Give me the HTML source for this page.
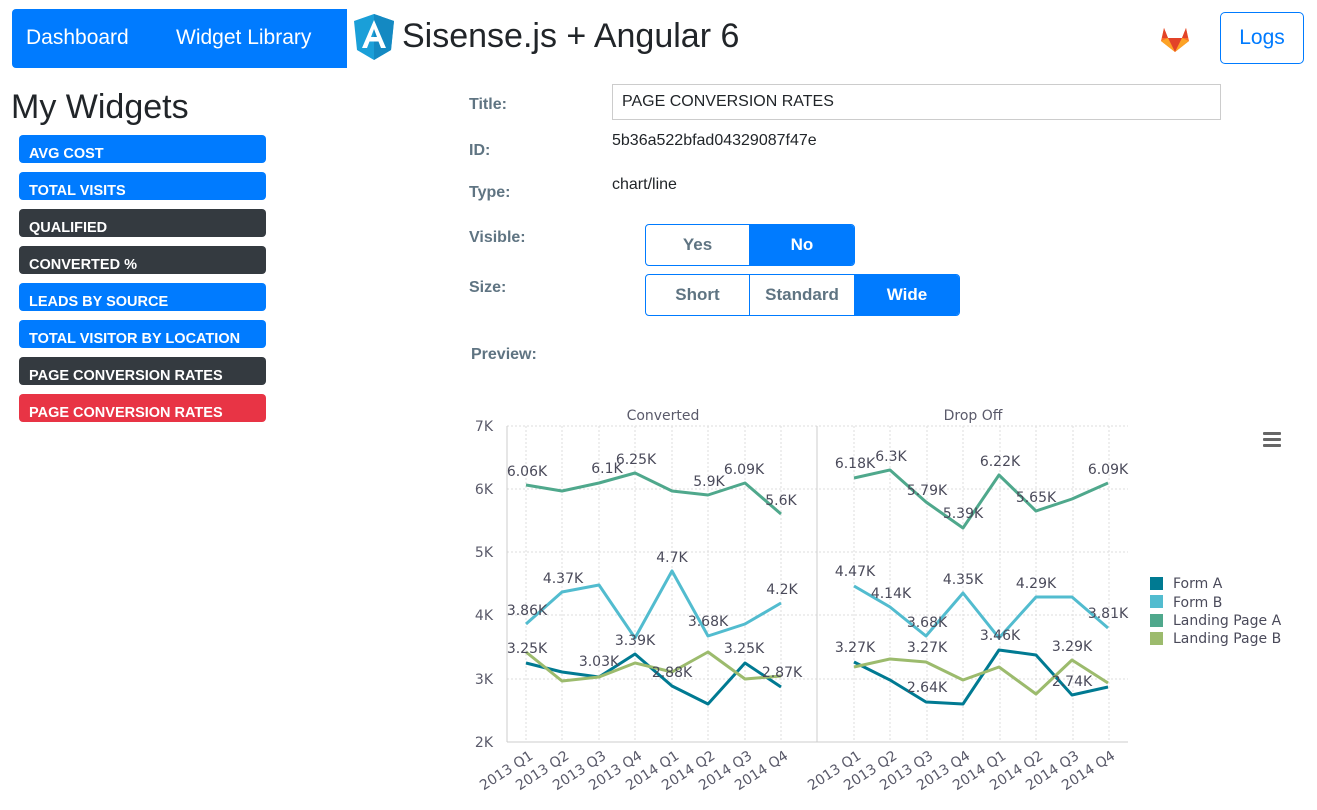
<!DOCTYPE html>
<html><head><meta charset="utf-8"><style>
*{box-sizing:border-box}
body{margin:0;width:1317px;height:810px;overflow:hidden;background:#fff;font-family:"Liberation Sans",sans-serif;color:#212529;position:relative}
.abs{position:absolute}
.nav{left:12px;top:9px;width:335px;height:59px;background:#007bff;border-radius:4px 0 0 4px;color:#fff;font-size:21px}
.badge{position:absolute;left:19px;width:247px;height:28px;border-radius:4px;color:#fff;font-weight:bold;font-size:14.5px;padding:11px 0 0 10px;line-height:17px}
.b{background:#007bff}.d{background:#343a40}.r{background:#e83445}
.lbl{position:absolute;left:469px;font-weight:bold;color:#5f7482;font-size:16px}
.grp{position:absolute;display:flex;border:1px solid #007bff;border-radius:4px;overflow:hidden}
.grp div{height:40px;line-height:40px;text-align:center;font-weight:bold;font-size:17px;color:#5f7482;border-right:1px solid #007bff}
.grp div:last-child{border-right:none}
.grp .on{background:#007bff;color:#fff}
</style></head><body>
<div class="abs nav"><span class="abs" style="left:14px;top:17px">Dashboard</span><span class="abs" style="left:164px;top:17px">Widget Library</span></div>
<svg class="abs" style="left:354px;top:14px" width="40" height="46" viewBox="0 0 40 46">
<path d="M20 0L0 7l3 29 17 10 17-10 3-29z" fill="#1a9fd8"/><path d="M20 0v46l17-10 3-29z" fill="#1489c2"/>
<path d="M20 6L8 34h5l2.5-6.5h9L27 34h5zM17 23l3-8 3 8z" fill="#fff"/></svg>
<div class="abs" style="left:402px;top:17px;font-size:34px">Sisense.js + Angular 6</div>
<svg class="abs" style="left:1161px;top:27px" width="28" height="25" viewBox="0 0 28 25">
<path d="M14 25L0 14 3 1l4 10h14l4-10 3 13z" fill="#fc6d26"/><path d="M14 25L7 11h14z" fill="#e24329"/><path d="M14 25L0 14l7-3z M14 25l14-11-7-3z" fill="#fca326"/><path d="M3 1l4 10H1z M25 1l-4 10h6z" fill="#e24329"/></svg>
<div class="abs" style="left:1220px;top:12px;width:84px;height:52px;border:1px solid #007bff;border-radius:5px;color:#007bff;font-size:21px;text-align:center;line-height:50px">Logs</div>
<div class="abs" style="left:11px;top:88px;font-size:34px">My Widgets</div>
<div class="badge b" style="top:135px">AVG COST</div>
<div class="badge b" style="top:172px">TOTAL VISITS</div>
<div class="badge d" style="top:209px">QUALIFIED</div>
<div class="badge d" style="top:246px">CONVERTED %</div>
<div class="badge b" style="top:283px">LEADS BY SOURCE</div>
<div class="badge b" style="top:320px">TOTAL VISITOR BY LOCATION</div>
<div class="badge d" style="top:357px">PAGE CONVERSION RATES</div>
<div class="badge r" style="top:394px">PAGE CONVERSION RATES</div>
<div class="lbl" style="top:96px">Title:</div>
<div class="lbl" style="top:142px">ID:</div>
<div class="lbl" style="top:184px">Type:</div>
<div class="lbl" style="top:229px">Visible:</div>
<div class="lbl" style="top:279px">Size:</div>
<div class="lbl" style="top:346px;left:471px">Preview:</div>
<div class="abs" style="left:612px;top:84px;width:609px;height:36px;border:1px solid #ccc;padding:8px 9px;font-size:16px">PAGE CONVERSION RATES</div>
<div class="abs" style="left:612px;top:132px;font-size:16px">5b36a522bfad04329087f47e</div>
<div class="abs" style="left:612px;top:176px;font-size:16px">chart/line</div>
<div class="grp" style="left:645px;top:224px"><div style="width:104px">Yes</div><div class="on" style="width:104px">No</div></div>
<div class="grp" style="left:645px;top:274px"><div style="width:104px">Short</div><div style="width:105px">Standard</div><div class="on" style="width:104px">Wide</div></div>
<svg class="abs" style="left:0;top:0" width="1317" height="810" font-family="'DejaVu Sans',sans-serif" font-size="13">
<g stroke="#ddd" stroke-dasharray="2,2" stroke-width="1">
<line x1="507" y1="426" x2="1128" y2="426"/><line x1="507" y1="489" x2="1128" y2="489"/><line x1="507" y1="552" x2="1128" y2="552"/><line x1="507" y1="615" x2="1128" y2="615"/><line x1="507" y1="679" x2="1128" y2="679"/>
<g id="v"><line x1="526" y1="426" x2="526" y2="742"/><line x1="562" y1="426" x2="562" y2="742"/><line x1="599" y1="426" x2="599" y2="742"/><line x1="635" y1="426" x2="635" y2="742"/><line x1="672" y1="426" x2="672" y2="742"/><line x1="708" y1="426" x2="708" y2="742"/><line x1="745" y1="426" x2="745" y2="742"/><line x1="781" y1="426" x2="781" y2="742"/></g>
<use href="#v" x="328"/>
</g>
<line x1="507" y1="426" x2="507" y2="742" stroke="#ccc"/><line x1="817" y1="426" x2="817" y2="742" stroke="#ccc"/>
<line x1="507" y1="742" x2="1128" y2="742" stroke="#ccc"/>
<g fill="#5a5a6a" text-anchor="end" font-size="14"><text x="493" y="431">7K</text><text x="493" y="494">6K</text><text x="493" y="557">5K</text><text x="493" y="620">4K</text><text x="493" y="684">3K</text><text x="493" y="747">2K</text></g>
<g fill="#5a5a6a" text-anchor="middle" font-size="14"><text x="663" y="420">Converted</text><text x="973" y="420">Drop Off</text></g>
<g fill="none" stroke-width="3" stroke-linejoin="round">
<polyline stroke="#4fa88c" points="526,485 562,491 599,483 635,473 672,491 708,495 745,483 781,514"/>
<polyline stroke="#52bccf" points="526,624 562,592 599,585 635,638 672,571 708,636 745,624 781,603"/>
<polyline stroke="#007a92" points="526,663 562,672 599,677 635,654 672,686 708,704 745,663 781,687"/>
<polyline stroke="#9cbb6d" points="526,652 562,681 599,677 635,663 672,672 708,652 745,679 781,676"/>
<polyline stroke="#4fa88c" points="854,478 890,470 926,502 963,528 999,475 1036,511 1072,499 1108,483"/>
<polyline stroke="#52bccf" points="854,586 890,607 926,636 963,593 999,638 1036,597 1072,597 1108,628"/>
<polyline stroke="#007a92" points="854,662 890,680 926,702 963,704 999,650 1036,655 1072,695 1108,687"/>
<polyline stroke="#9cbb6d" points="854,667 890,659 926,662 963,680 999,667 1036,694 1072,660 1108,683"/>
</g>
<g fill="#4a4a5a" font-size="14" text-anchor="middle">
<text x="527" y="476">6.06K</text><text x="607" y="473">6.1K</text><text x="636" y="464">6.25K</text><text x="709" y="486">5.9K</text><text x="744" y="474">6.09K</text><text x="781" y="505">5.6K</text>
<text x="563" y="583">4.37K</text><text x="672" y="562">4.7K</text><text x="782" y="594">4.2K</text><text x="527" y="615">3.86K</text><text x="708" y="626">3.68K</text>
<text x="527" y="653">3.25K</text><text x="635" y="645">3.39K</text><text x="599" y="666">3.03K</text><text x="672" y="677">2.88K</text><text x="744" y="653">3.25K</text><text x="782" y="677">2.87K</text>
<text x="855" y="468">6.18K</text><text x="891" y="461">6.3K</text><text x="927" y="495">5.79K</text><text x="963" y="518">5.39K</text><text x="1000" y="466">6.22K</text><text x="1036" y="502">5.65K</text><text x="1108" y="474">6.09K</text>
<text x="855" y="576">4.47K</text><text x="891" y="598">4.14K</text><text x="927" y="627">3.68K</text><text x="963" y="584">4.35K</text><text x="1036" y="588">4.29K</text><text x="1108" y="618">3.81K</text>
<text x="855" y="652">3.27K</text><text x="927" y="652">3.27K</text><text x="1000" y="640">3.46K</text><text x="1072" y="651">3.29K</text><text x="927" y="692">2.64K</text><text x="1072" y="686">2.74K</text>
</g>
<g fill="#5a5a6a" font-size="14" text-anchor="end">
<text transform="translate(534,758) rotate(-33)">2013 Q1</text><text transform="translate(570,758) rotate(-33)">2013 Q2</text><text transform="translate(607,758) rotate(-33)">2013 Q3</text><text transform="translate(643,758) rotate(-33)">2013 Q4</text><text transform="translate(680,758) rotate(-33)">2014 Q1</text><text transform="translate(716,758) rotate(-33)">2014 Q2</text><text transform="translate(753,758) rotate(-33)">2014 Q3</text><text transform="translate(789,758) rotate(-33)">2014 Q4</text>
<text transform="translate(862,758) rotate(-33)">2013 Q1</text><text transform="translate(898,758) rotate(-33)">2013 Q2</text><text transform="translate(934,758) rotate(-33)">2013 Q3</text><text transform="translate(971,758) rotate(-33)">2013 Q4</text><text transform="translate(1007,758) rotate(-33)">2014 Q1</text><text transform="translate(1044,758) rotate(-33)">2014 Q2</text><text transform="translate(1080,758) rotate(-33)">2014 Q3</text><text transform="translate(1116,758) rotate(-33)">2014 Q4</text>
</g>
<g fill="#666"><rect x="1263" y="432" width="18" height="3" rx="1"/><rect x="1263" y="438" width="18" height="3" rx="1"/><rect x="1263" y="444" width="18" height="3" rx="1"/></g>
<rect x="1150" y="577" width="13" height="13" fill="#007a92"/><rect x="1150" y="595" width="13" height="13" fill="#52bccf"/><rect x="1150" y="614" width="13" height="13" fill="#4fa88c"/><rect x="1150" y="632" width="13" height="13" fill="#9cbb6d"/>
<g fill="#4a4a5a" font-size="14"><text x="1173" y="588">Form A</text><text x="1173" y="607">Form B</text><text x="1173" y="625">Landing Page A</text><text x="1173" y="643">Landing Page B</text></g>
</svg>
</body></html>
